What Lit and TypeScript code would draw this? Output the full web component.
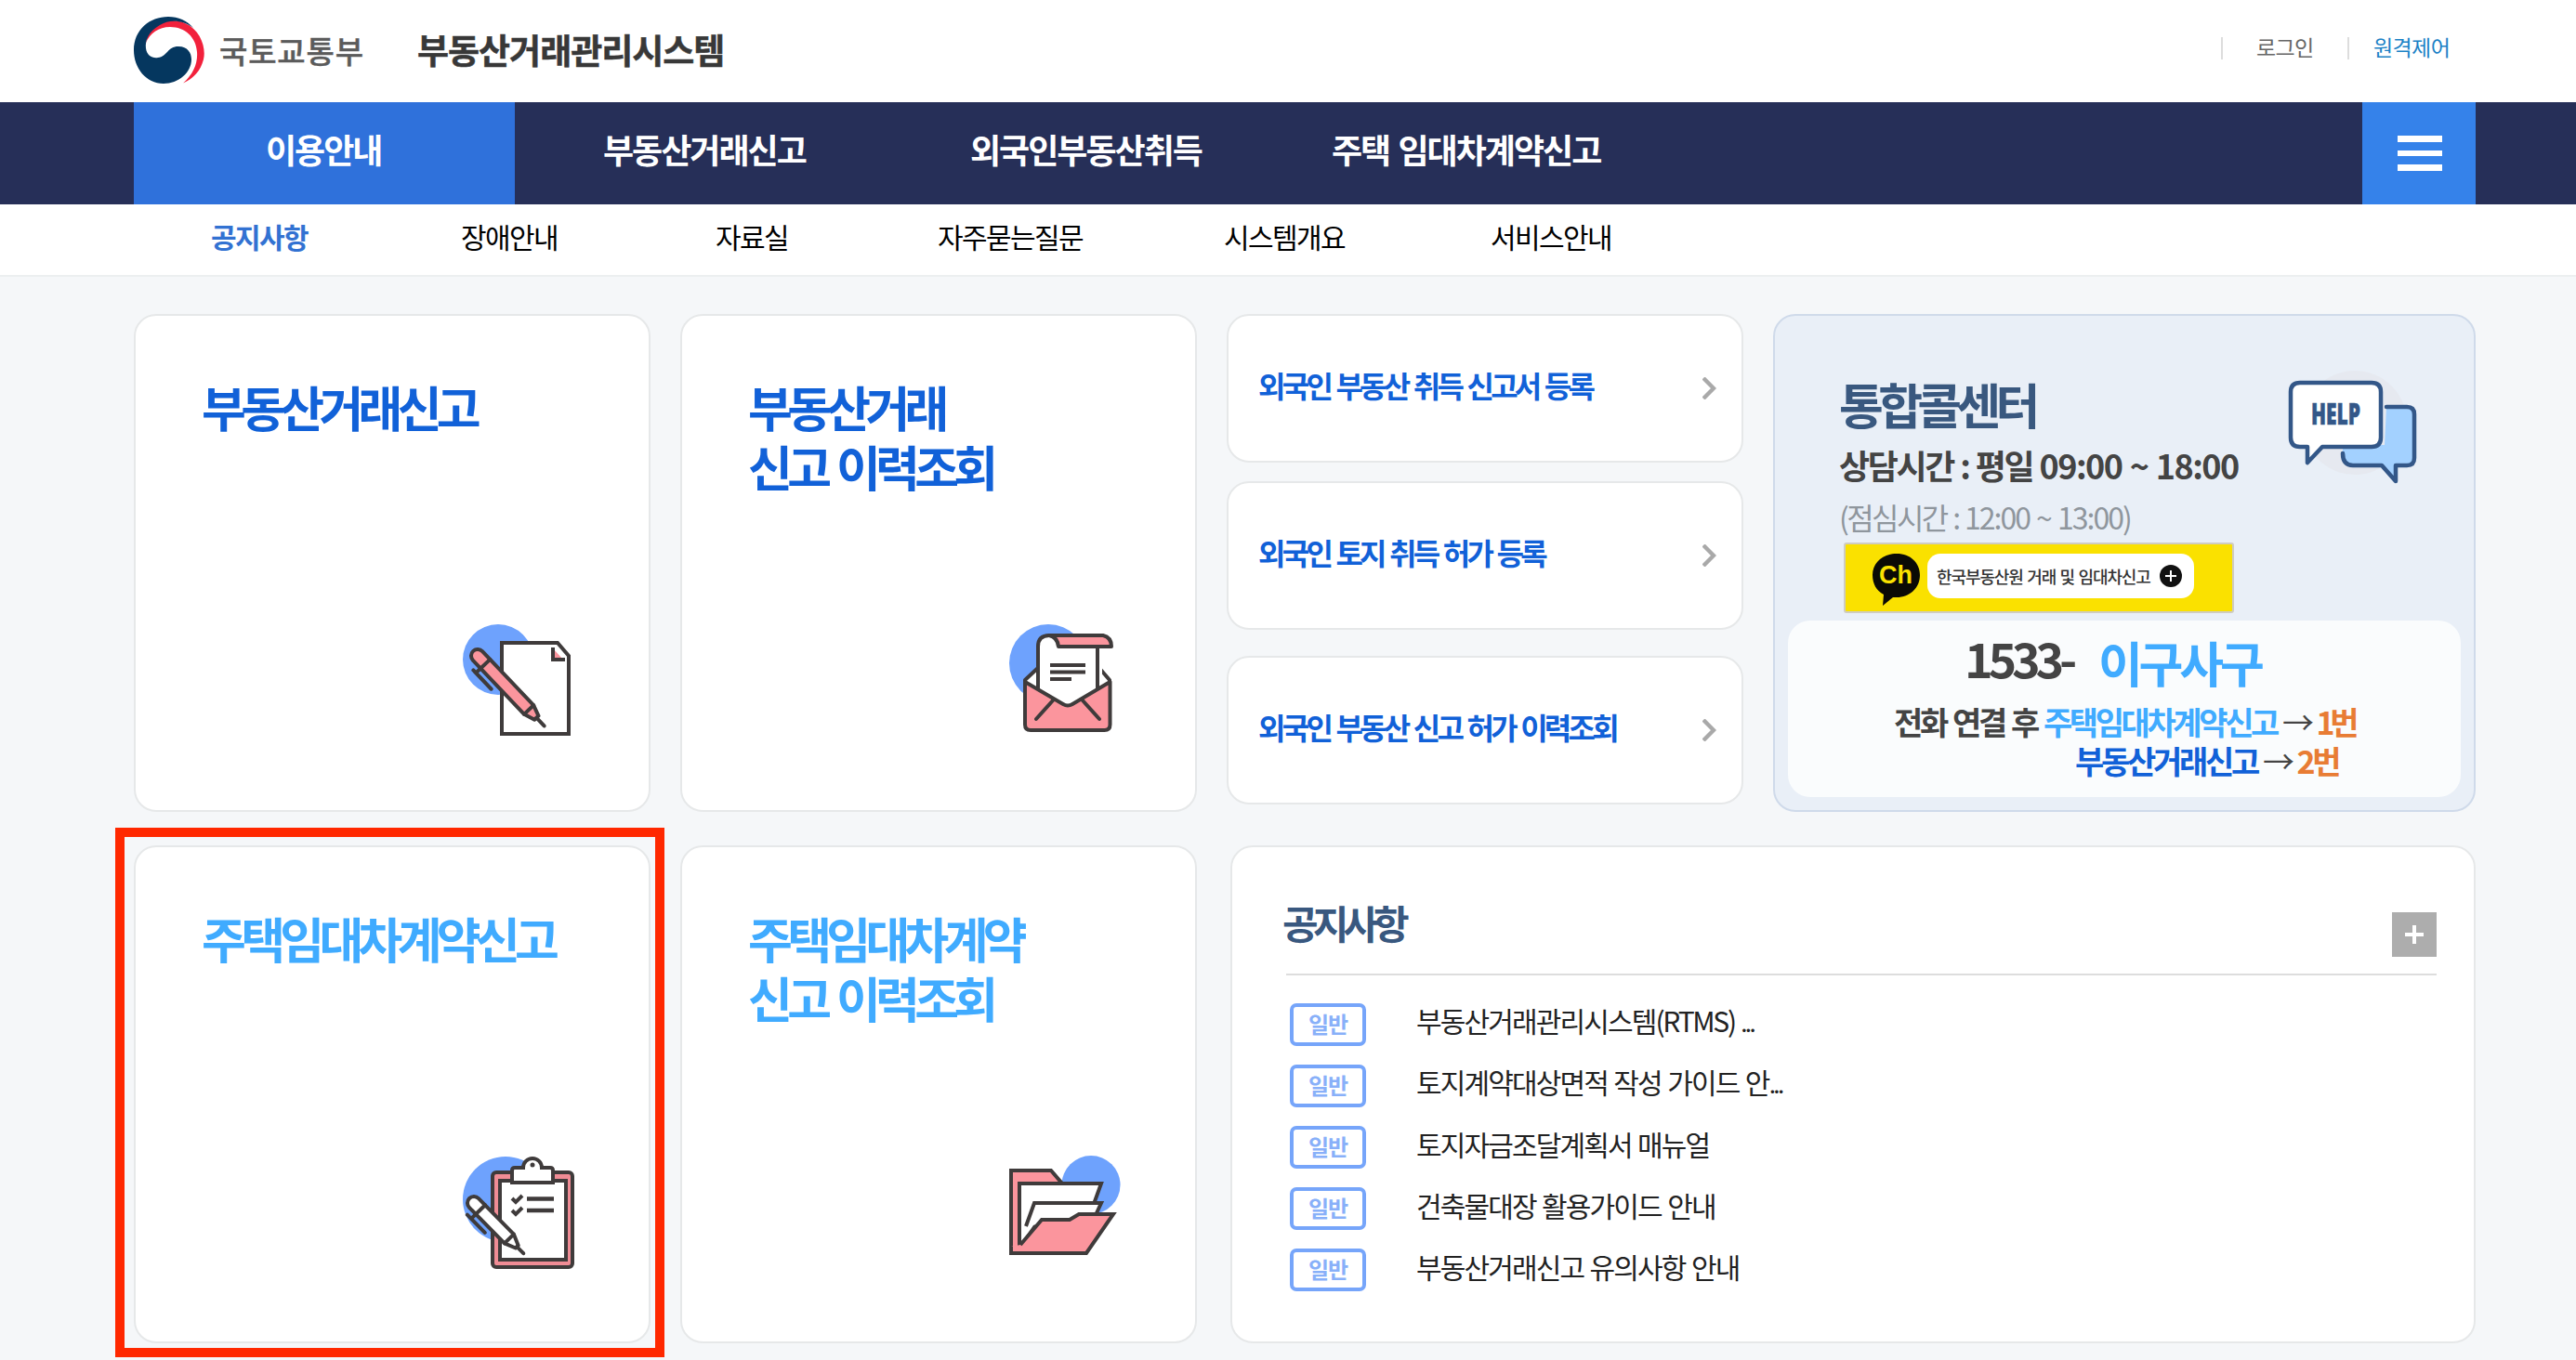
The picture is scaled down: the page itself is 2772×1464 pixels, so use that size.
import { LitElement, html, css, svg } from "lit";
import { customElement, property } from "lit/decorators.js";

const INK = "#3f3b3b";
const PINK = "#fb959d";
const BLUE = "#6ea2fd";

const icons: Record<string, unknown> = {
  write: svg`
    <circle cx="38" cy="38" r="38" fill=${BLUE} />
    <path d="M42 20H102L114 34V118H42Z" fill="#fff" stroke=${INK} stroke-width="4" />
    <path d="M97 26V38H108Z" fill=${PINK} />
    <path d="M97 25V38H110" fill="none" stroke=${INK} stroke-width="4" />
    <g transform="translate(16 34) rotate(46.5)" stroke=${INK} stroke-width="4" stroke-linejoin="round" stroke-linecap="round">
      <path d="M0 -7H80L92 -3V3L80 7H0A7 7 0 0 1 0 -7Z" fill=${PINK} />
      <path d="M12 -7V7M80 -7V7M92 0H104" fill="none" />
      <path d="M12 7V14M8 14H36" fill="none" />
    </g>`,
  mail: svg`
    <circle cx="42" cy="42" r="42" fill=${BLUE} />
    <path d="M17 60L32 46H96L108 60V76H17Z" fill="#fff" stroke=${INK} stroke-width="4" stroke-linejoin="round" />
    <path d="M31 86V24Q31 12 43 12H100V86Z" fill="#fff" />
    <path d="M31 76V24Q31 12 43 12H98M95 24V76" fill="none" stroke=${INK} stroke-width="4" />
    <path d="M43 12H101Q110 14 110 24H53Q52 14 43 12Z" fill=${PINK} stroke=${INK} stroke-width="4" stroke-linejoin="round" />
    <path d="M44 44H82M44 51.5H82M44 59H67" stroke=${INK} stroke-width="4" fill="none" />
    <path d="M17 62L58 86Q63 89 68 86L108.500 62V108Q108.500 114 102.500 114H23Q17 114 17 108Z" fill=${PINK} stroke=${INK} stroke-width="4" stroke-linejoin="round" />
    <path d="M47 82L29 102M79 82L97 102" stroke=${INK} stroke-width="4" stroke-linecap="round" fill="none" />`,
  clipboard: svg`
    <circle cx="46" cy="47" r="46" fill=${BLUE} />
    <rect x="32" y="18" width="86" height="102" rx="4" fill="#f08c95" stroke=${INK} stroke-width="4" />
    <rect x="40" y="27" width="71" height="85" fill="#fff" stroke=${INK} stroke-width="4" />
    <path d="M53 28V15Q53 12 56 12H65A10 10 0 1 1 85 12H94Q97 12 97 15V28Z" transform="translate(0 1)" fill="#fff" stroke=${INK} stroke-width="4" />
    <circle cx="75" cy="10" r="2.500" fill=${INK} />
    <path d="M53 46L57 50L64 43M53 59L57 63L64 56" stroke=${INK} stroke-width="4" fill="none" />
    <path d="M69 46.500H98M69 59H98" stroke=${INK} stroke-width="4.500" fill="none" />
    <g transform="translate(12 51) rotate(45.500)" stroke=${INK} stroke-width="4" stroke-linejoin="round" stroke-linecap="round">
      <path d="M0 -7H54L66 -2V2L54 7H0A7 7 0 0 1 0 -7Z" fill="#fff" />
      <path d="M10 -7V7M54 -7V7M66 0H76" fill="none" />
      <path d="M10 7V14M4 14H31" fill="none" />
    </g>`,
  folder: svg`
    <circle cx="88" cy="31.500" r="31.500" fill=${BLUE} />
    <path d="M2 105V16H45L57 30V105Z" fill=${PINK} stroke=${INK} stroke-width="4" />
    <path d="M11 96V30H99L91 52V64H36L14 96Z" fill="#fff" stroke=${INK} stroke-width="4" />
    <path d="M18 76L27 51H99L93 64" fill="#fff" stroke=${INK} stroke-width="4" />
    <path d="M12 96L35 69H65L75 63H112L83 105H2V98" fill=${PINK} stroke=${INK} stroke-width="4" />`,
};

@customElement("menu-card")
class MenuCard extends LitElement {
  @property({ attribute: false }) lines: string[] = [];
  @property() icon = "";
  @property({ type: Boolean, reflect: true }) light = false;

  static styles = css`
    :host {
      display: flex;
      flex-direction: column;
      box-sizing: border-box;
      width: 556px;
      height: 536px;
      padding: 66px 72px 0 71px;
      background: #fff;
      border: 2px solid #e6e8e9;
      border-radius: 24px;
    }
    .title {
      height: 266px;
      color: #1161d8;
      font-size: 52px;
      line-height: 64px;
      font-weight: 700;
      letter-spacing: -5.7px;
      word-spacing: 4.5px;
      white-space: nowrap;
    }
    :host([light]) .title { color: #40abff; }
    .icon {
      display: block;
      align-self: flex-end;
      width: 124px;
      height: 124px;
      margin-right: 4px;
      overflow: visible;
    }
  `;

  render() {
    return html`
      <div class="title">${this.lines.map((l) => html`<div>${l}</div>`)}</div>
      <svg class="icon" viewBox="0 0 124 124">${icons[this.icon]}</svg>
    `;
  }
}

@customElement("app-root")
class AppRoot extends LitElement {
  static styles = css`
    :host {
      display: block;
      position: relative;
      height: 1464px;
      overflow: hidden;
      background: #f5f7f9;
      font-family: "Noto Sans CJK KR", "Noto Sans", sans-serif;
      white-space: nowrap;
    }
    .top {
      display: flex;
      align-items: center;
      height: 110px;
      box-sizing: border-box;
      padding: 0 108px 2px 144px;
      background: #fff;
    }
    .emblem { width: 76px; height: 72px; }
    .ministry {
      margin-left: 16px;
      width: 213px;
      font-size: 33px;
      font-weight: 500;
      letter-spacing: 0.8px;
      line-height: 50px;
      color: #5b5b5b;
      -webkit-text-stroke: 0.4px #5b5b5b;
    }
    .system {
      font-size: 37px;
      font-weight: 700;
      letter-spacing: -1px;
      line-height: 50px;
      padding-bottom: 2px;
      color: #383838;
      -webkit-text-stroke: 0.5px #383838;
    }
    .util {
      display: flex;
      align-items: center;
      margin-left: auto;
      width: 274px;
      padding-bottom: 4px;
      font-size: 23px;
      line-height: 30px;
      letter-spacing: -0.6px;
      color: #666;
    }
    .bar { width: 2px; height: 24px; background: #ddd; }
    .login { width: 98px; padding-left: 36px; margin-top: -4px; }
    .remote { padding-left: 26px; color: #1b82c6; margin-top: -4px; }
    .nav {
      display: grid;
      grid-template-columns: 410px 395px 389px 1fr 122px;
      height: 110px;
      padding: 0 108px 0 144px;
      background: #262f58;
      color: #fff;
      font-size: 36px;
      line-height: 101px;
      font-weight: 700;
      letter-spacing: -2px;
      word-spacing: 3px;
    }
    .active { background: #2f71db; padding-left: 142px; }
    .n2 { padding-left: 95px; }
    .n3 { padding-left: 95px; }
    .n4 { padding-left: 95px; }
    .burger {
      display: flex;
      flex-direction: column;
      align-items: center;
      gap: 9px;
      padding: 36px 0 0 2px;
      background: #3582ea;
    }
    .burger i { width: 48px; height: 6.67px; background: #fff; }
    .sub {
      display: grid;
      grid-template-columns: 269px 274px 239px 308px 287px 200px;
      box-sizing: border-box;
      height: 78px;
      padding-left: 227px;
      background: #fff;
      border-bottom: 2px solid #eceff0;
      color: #000;
      font-size: 30px;
      line-height: 68px;
      letter-spacing: -1.6px;
    }
    .sub .on { color: #3272d2; font-weight: 700; }
    .main {
      display: grid;
      grid-template-columns: 556px 556px 556px 756px;
      grid-template-rows: 536px 536px;
      column-gap: 32px;
      row-gap: 36px;
      padding: 40px 0 0 144px;
    }
    .links { display: flex; flex-direction: column; }
    .link {
      display: flex;
      flex: none;
      justify-content: space-between;
      box-sizing: border-box;
      width: 556px;
      height: 160px;
      padding: 52px 27px 0 32px;
      margin-bottom: 20px;
      background: #fff;
      border: 2px solid #e6e8e9;
      border-radius: 24px;
      color: #1161d8;
      font-size: 32px;
      font-weight: 700;
      line-height: 44px;
      letter-spacing: -3.75px;
      word-spacing: 2.8px;
    }
    .link:nth-child(2) { margin-bottom: 28px; }
    .link:nth-child(3) { margin-bottom: 0; }
    .link svg { width: 15px; height: 24px; margin-top: 14px; }
    .help {
      box-sizing: border-box;
      padding: 65px 14px 0 14px;
      background: #e9eff7;
      border: 2px solid #cfdaea;
      border-radius: 24px;
    }
    .helptop { display: flex; height: 179px; padding-left: 55px; }
    .helptext { width: 483px; }
    .helptitle { font-size: 52px; font-weight: 700; line-height: 60px; letter-spacing: -5.7px; color: #39587f; }
    .hours { margin-top: 11px; font-size: 36px; font-weight: 700; line-height: 48px; letter-spacing: -2.4px; word-spacing: 1.5px; color: #444; }
    .hours .time { letter-spacing: -1.5px; }
    .lunch { margin-top: 12px; font-size: 32px; line-height: 40px; letter-spacing: -2.6px; word-spacing: 2px; color: #8f969d; }
    .lunch .time { letter-spacing: -2px; }
    .helpicon { width: 140px; height: 125px; margin-top: -6px; }
    .banner {
      display: flex;
      align-items: center;
      box-sizing: border-box;
      width: 420px;
      height: 76px;
      margin-left: 60px;
      padding-left: 28px;
      background: #fae100;
      border: 2px solid #cfccc0;
      border-radius: 3px;
    }
    .ch { width: 54px; height: 58px; margin-top: 4px; }
    .pill {
      display: flex;
      align-items: center;
      justify-content: space-between;
      box-sizing: border-box;
      width: 287px;
      height: 48px;
      margin-left: 6px;
      margin-bottom: 4px;
      padding: 0 13px 0 10px;
      border-radius: 14px;
      background: #fff;
      color: #333;
      font-size: 18px;
      letter-spacing: -1.1px;
      word-spacing: 1.5px;
      line-height: 44px;
      font-weight: 500;
    }
    .pill svg { width: 24px; height: 24px; }
    .phone {
      box-sizing: border-box;
      height: 190px;
      margin-top: 8px;
      padding-top: 15px;
      border-radius: 24px;
      background: #fafcfd;
      color: #444;
      font-weight: 700;
      font-size: 34px;
      letter-spacing: -3.3px;
      word-spacing: 2.6px;
      line-height: 42px;
    }
    .number { display: flex; gap: 28px; padding-left: 190px; margin-bottom: 13px; font-size: 52px; line-height: 60px; letter-spacing: -5.2px; }
    .number .digits { margin-top: -5px; }
    .number .sky { letter-spacing: -4.2px; }
    .row1 { padding-left: 114px; }
    .row1 .sky { letter-spacing: -3.4px; }
    .row2 { padding-left: 309px; }
    .sky { color: #40abff; }
    .blue { color: #1161d8; }
    .orange { color: #e87c34; }
    .row1 .orange { letter-spacing: -5.5px; }
    .arrow { font-weight: 400; margin: 0 6px 0 6px; }
    .notice {
      grid-column: 3 / 5;
      box-sizing: border-box;
      margin-left: 4px;
      padding: 0 40px 0 58px;
      background: #fff;
      border: 2px solid #e6e8e9;
      border-radius: 24px;
    }
    .noticehead {
      display: flex;
      justify-content: space-between;
      height: 136px;
      border-bottom: 2px solid #ddd;
      margin-bottom: 30px;
    }
    .noticehead h2 { margin: 55px 0 0 -4px; font-size: 42px; line-height: 52px; font-weight: 700; letter-spacing: -6px; color: #39587f; }
    .more { width: 48px; height: 48px; margin-top: 70px; }
    .item { display: flex; align-items: center; height: 46px; margin: 0 0 20px 4px; }
    .badge {
      box-sizing: border-box;
      width: 82px;
      height: 46px;
      border: 4px solid #76a5fa;
      border-radius: 7px;
      text-align: center;
      color: #88b0f9;
      font-size: 24px;
      line-height: 35px;
      letter-spacing: -1px;
      font-weight: 700;
    }
    .subject { margin-left: 54px; padding-bottom: 9px; font-size: 30px; line-height: 38px; letter-spacing: -1.85px; word-spacing: 1.5px; color: #222; }
    .latin { letter-spacing: -2.3px; }
    .dots { font-size: 26px; letter-spacing: -2.6px; }
    .highlight {
      position: absolute;
      left: 124px;
      top: 891px;
      width: 591px;
      height: 570px;
      box-sizing: border-box;
      border: 10px solid #ff2800;
    }
  `;

  private links = ["외국인 부동산 취득 신고서 등록", "외국인 토지 취득 허가 등록", "외국인 부동산 신고 허가 이력조회"];
  private notices: unknown[] = [
    html`부동산거래관리시스템<span class="latin">(RTMS)</span> <span class="dots">...</span>`,
    html`토지계약대상면적 작성 가이드 안<span class="dots">...</span>`,
    "토지자금조달계획서 매뉴얼",
    "건축물대장 활용가이드 안내",
    "부동산거래신고 유의사항 안내",
  ];

  render() {
    return html`
      <header class="top">
        <svg class="emblem" viewBox="0 0 76 72">
          <path d="M13 28C16 8 36 -1 55 7C72 14 78 34 75 46C72 58 64 67 53 71.500C64 62 69 50 68 38C67 22 55 11 39 11C27 11 17 18 13 28Z" fill="#f2213c" />
          <path d="M37 0C48 0 57 4 64 12C52 3 38 3 28 9C16 16 12 25 13 34C14 42 20 45 26 44C36 43 36 32 48 32C58 32 62 39 62 46C62 60 48 72 32 72C13 72 0 55 0 36C0 14 17 0 37 0Z" fill="#05375f" />
        </svg>
        <div class="ministry">국토교통부</div>
        <div class="system">부동산거래관리시스템</div>
        <div class="util">
          <span class="bar"></span><span class="login">로그인</span>
          <span class="bar"></span><span class="remote">원격제어</span>
        </div>
      </header>
      <nav class="nav">
        <div class="active">이용안내</div>
        <div class="n2">부동산거래신고</div>
        <div class="n3">외국인부동산취득</div>
        <div class="n4">주택 임대차계약신고</div>
        <div class="burger"><i></i><i></i><i></i></div>
      </nav>
      <nav class="sub">
        <span class="on">공지사항</span><span>장애안내</span><span>자료실</span>
        <span>자주묻는질문</span><span>시스템개요</span><span>서비스안내</span>
      </nav>
      <main class="main">
        <menu-card icon="write" .lines=${["부동산거래신고"]}></menu-card>
        <menu-card icon="mail" .lines=${["부동산거래", "신고 이력조회"]}></menu-card>
        <div class="links">
          ${this.links.map(
            (t) => html`<div class="link"><span>${t}</span>
              <svg viewBox="0 0 15 24"><path d="M1 1L12 12L1 23" fill="none" stroke="#a9a9a9" stroke-width="4.400" /></svg>
            </div>`
          )}
        </div>
        <section class="help">
          <div class="helptop">
            <div class="helptext">
              <div class="helptitle">통합콜센터</div>
              <div class="hours">상담시간 : 평일 <span class="time">09:00 ~ 18:00</span></div>
              <div class="lunch">(점심시간 : <span class="time">12:00 ~ 13:00)</span></div>
            </div>
            <svg class="helpicon" viewBox="0 0 140 125">
              <circle cx="72" cy="56" r="56" fill="#e6e9f0" />
              <path d="M106 39H128Q136 39 136 47V94Q136 102 128 102H116V119L101 102H70Q59 102 59 88V80H104Z" fill="#a3d1ff" />
              <path d="M106 39H128Q136 39 136 47V94Q136 102 128 102H116V119L101 102H70Q59 102 59 89" fill="none" stroke="#335788" stroke-width="4.500" stroke-linejoin="round" stroke-linecap="round" />
              <path d="M13 13H90Q100 13 100 23V72Q100 82 90 82H37L21 99V82H13Q3 82 3 72V23Q3 13 13 13Z" fill="#fff" stroke="#335788" stroke-width="4.500" stroke-linejoin="round" />
              <text x="25" y="58" textLength="53" lengthAdjust="spacingAndGlyphs" font-family="Open Sans, sans-serif" font-weight="800" font-size="31" fill="#335788" stroke="#335788" stroke-width="0.600">HELP</text>
            </svg>
          </div>
          <div class="banner">
            <svg class="ch" viewBox="0 0 54 58">
              <path d="M27 1C42 1 52 11 52 24C52 38 41 48 27 48H23L12 57L13 45C5 41 1 33 1 24C1 11 12 1 27 1Z" fill="#0b0a05" />
              <text x="8" y="33" font-family="Liberation Sans, sans-serif" font-weight="700" font-size="27" textLength="36" lengthAdjust="spacingAndGlyphs" fill="#fae100">Ch</text>
            </svg>
            <div class="pill">
              <span>한국부동산원 거래 및 임대차신고</span>
              <svg viewBox="0 0 24 24"><circle cx="12" cy="12" r="12" fill="#111" /><path d="M12 6V18M6 12H18" stroke="#fff" stroke-width="2" /></svg>
            </div>
          </div>
          <div class="phone">
            <div class="number"><span class="digits">1533-</span><span class="sky">이구사구</span></div>
            <div class="row1">전화 연결 후 <span class="sky">주택임대차계약신고</span><span class="arrow">→</span><span class="orange">1번</span></div>
            <div class="row2"><span class="blue">부동산거래신고</span><span class="arrow">→</span><span class="orange">2번</span></div>
          </div>
        </section>
        <menu-card light icon="clipboard" .lines=${["주택임대차계약신고"]}></menu-card>
        <menu-card light icon="folder" .lines=${["주택임대차계약", "신고 이력조회"]}></menu-card>
        <section class="notice">
          <div class="noticehead">
            <h2>공지사항</h2>
            <svg class="more" viewBox="0 0 48 48"><rect width="48" height="48" fill="#adadad" /><path d="M24 14V34M14 24H34" stroke="#fff" stroke-width="4" /></svg>
          </div>
          ${this.notices.map((t) => html`<div class="item"><span class="badge">일반</span><span class="subject">${t}</span></div>`)}
        </section>
      </main>
      <div class="highlight"></div>
    `;
  }
}
